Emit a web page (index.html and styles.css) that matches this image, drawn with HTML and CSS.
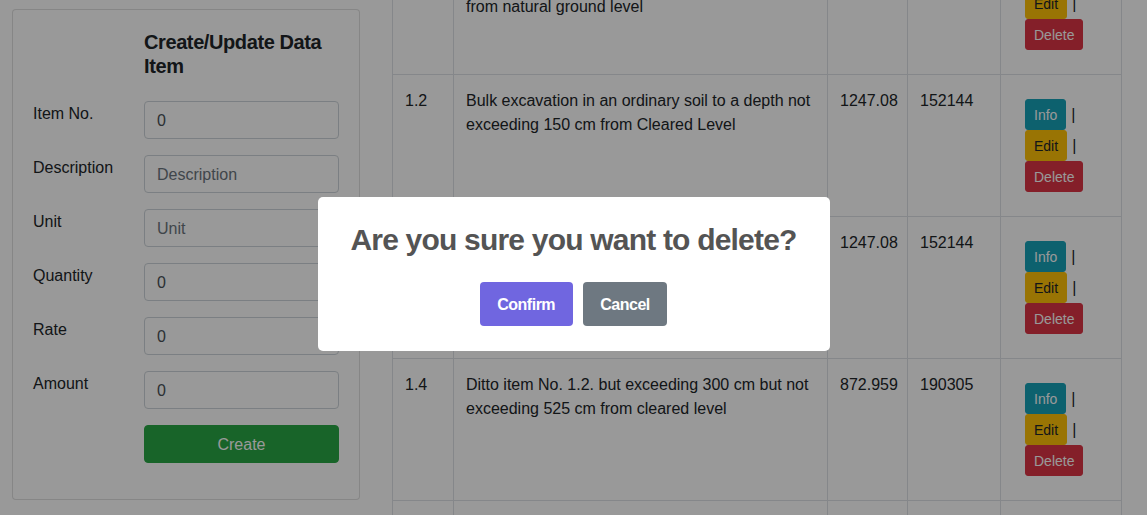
FILE: index.html
```html
<!DOCTYPE html>
<html lang="en">
<head>
<meta charset="utf-8">
<title>Data Items</title>
<link rel="stylesheet" href="styles.css">
</head>
<body>
<div class="page">
  <aside class="card">
    <h5 class="card-title">Create/Update Data Item</h5>
    <div class="form-row"><label class="form-label">Item No.</label><div class="field"><input class="form-control" type="text" value="0"></div></div>
    <div class="form-row"><label class="form-label">Description</label><div class="field"><input class="form-control" type="text" placeholder="Description"></div></div>
    <div class="form-row"><label class="form-label">Unit</label><div class="field"><input class="form-control" type="text" placeholder="Unit"></div></div>
    <div class="form-row"><label class="form-label">Quantity</label><div class="field"><input class="form-control" type="text" value="0"></div></div>
    <div class="form-row"><label class="form-label">Rate</label><div class="field"><input class="form-control" type="text" value="0"></div></div>
    <div class="form-row"><label class="form-label">Amount</label><div class="field"><input class="form-control" type="text" value="0"></div></div>
    <div class="form-row"><div class="form-label"></div><div class="field"><button class="btn-create" type="button">Create</button></div></div>
  </aside>

  <main class="table-wrap">
    <table class="items">
      <colgroup><col class="c-no"><col class="c-desc"><col class="c-qty"><col class="c-amt"><col class="c-act"></colgroup>
      <tbody>
        <tr>
          <td>1.1</td>
          <td class="desc">Site clearance and excavation in an ordinary<br>soil to a depth not exceeding 30 cm measured<br>from natural ground level</td>
          <td>1350.25</td>
          <td>45230</td>
          <td class="act-cell"><div class="actions">
            <div class="act-line"><button class="btn btn-info">Info</button><span class="sep">|</span></div>
            <div class="act-line"><button class="btn btn-warning">Edit</button><span class="sep">|</span></div>
            <div class="act-line"><button class="btn btn-danger">Delete</button></div>
          </div></td>
        </tr>
        <tr>
          <td>1.2</td>
          <td class="desc">Bulk excavation in an ordinary soil to a depth not<br>exceeding 150 cm from Cleared Level</td>
          <td>1247.08</td>
          <td>152144</td>
          <td class="act-cell"><div class="actions">
            <div class="act-line"><button class="btn btn-info">Info</button><span class="sep">|</span></div>
            <div class="act-line"><button class="btn btn-warning">Edit</button><span class="sep">|</span></div>
            <div class="act-line"><button class="btn btn-danger">Delete</button></div>
          </div></td>
        </tr>
        <tr>
          <td>1.3</td>
          <td class="desc">Ditto item No. 1.2. but exceeding 150 cm but not<br>exceeding 300 cm from cleared level</td>
          <td>1247.08</td>
          <td>152144</td>
          <td class="act-cell"><div class="actions">
            <div class="act-line"><button class="btn btn-info">Info</button><span class="sep">|</span></div>
            <div class="act-line"><button class="btn btn-warning">Edit</button><span class="sep">|</span></div>
            <div class="act-line"><button class="btn btn-danger">Delete</button></div>
          </div></td>
        </tr>
        <tr>
          <td>1.4</td>
          <td class="desc">Ditto item No. 1.2. but exceeding 300 cm but not<br>exceeding 525 cm from cleared level</td>
          <td>872.959</td>
          <td>190305</td>
          <td class="act-cell"><div class="actions">
            <div class="act-line"><button class="btn btn-info">Info</button><span class="sep">|</span></div>
            <div class="act-line"><button class="btn btn-warning">Edit</button><span class="sep">|</span></div>
            <div class="act-line"><button class="btn btn-danger">Delete</button></div>
          </div></td>
        </tr>
        <tr>
          <td>1.5</td>
          <td class="desc">Ditto item No. 1.2. but exceeding 525 cm from<br>cleared level</td>
          <td>645.310</td>
          <td>168420</td>
          <td class="act-cell"><div class="actions">
            <div class="act-line"><button class="btn btn-info">Info</button><span class="sep">|</span></div>
            <div class="act-line"><button class="btn btn-warning">Edit</button><span class="sep">|</span></div>
            <div class="act-line"><button class="btn btn-danger">Delete</button></div>
          </div></td>
        </tr>
      </tbody>
    </table>
  </main>
</div>

<div class="swal-backdrop">
  <div class="swal-popup" role="dialog">
    <h2 class="swal-title">Are you sure you want to delete?</h2>
    <div class="swal-actions">
      <button class="swal-btn swal-confirm" type="button">Confirm</button>
      <button class="swal-btn swal-cancel" type="button">Cancel</button>
    </div>
  </div>
</div>
</body>
</html>
```
FILE: styles.css
```css
html, body {
  margin: 0;
  height: 100%;
  overflow: hidden;
}
body {
  font-family: "Liberation Sans", Arial, sans-serif;
  font-size: 16px;
  line-height: 24px;
  color: #212529;
  background: #fff;
}

.page {
  display: flex;
  align-items: flex-start;
  gap: 32px;
  padding-left: 12px;
}

/* ---------- form card ---------- */
.card {
  flex: 0 0 348px;
  box-sizing: border-box;
  margin-top: 9px;
  padding: 20px;
  border: 1px solid rgba(0, 0, 0, 0.125);
  border-radius: 4px;
  background: #fff;
}
.card-title {
  width: 195px;
  margin: 0 0 23px 111px;
  font-size: 20px;
  line-height: 24px;
  font-weight: 700;
  letter-spacing: -0.4px;
}
.form-row {
  display: flex;
  margin-bottom: 16px;
}
.form-label {
  flex: 0 0 111px;
  padding-top: 1px;
}
.field {
  flex: 0 0 195px;
}
.form-control {
  display: block;
  width: 100%;
  height: 38px;
  box-sizing: border-box;
  padding: 7px 12px 5px;
  font-family: inherit;
  font-size: 16px;
  line-height: 24px;
  color: #495057;
  background: #fff;
  border: 1px solid #ced4da;
  border-radius: 4px;
}
.form-control::placeholder {
  color: #6c757d;
}
.btn-create {
  display: block;
  width: 100%;
  height: 38px;
  padding-top: 2px;
  font-family: inherit;
  font-size: 16px;
  color: #fff;
  background: #28a745;
  border: 1px solid #28a745;
  border-radius: 4px;
}

/* ---------- table ---------- */
.table-wrap {
  flex: 0 0 729px;
}
.items {
  width: 729px;
  table-layout: fixed;
  border-collapse: collapse;
  margin-top: -68px; /* list is scrolled */
}
.c-no { width: 61px; }
.c-desc { width: 374px; }
.c-qty { width: 80px; }
.c-amt { width: 93px; }
.c-act { width: 121px; }
.items td {
  padding: 14px 12px 10px;
  vertical-align: top;
  border: 1px solid #dee2e6;
}
.items td.desc {
  white-space: nowrap;
}
.items td.act-cell {
  padding: 12px;
}
.actions {
  padding: 12px;
}
.act-line {
  display: flex;
  align-items: center;
  gap: 5px;
  height: 31px;
}
.sep {
  line-height: 24px;
  padding-top: 1px;
}
.btn {
  font-family: inherit;
  font-size: 14px;
  line-height: 21px;
  padding: 5px 8px 3px;
  border: 1px solid transparent;
  border-radius: 3px;
}
.btn-info { background: #17a2b8; border-color: #17a2b8; color: #fff; }
.btn-warning { background: #ffc107; border-color: #ffc107; color: #212529; }
.btn-danger { background: #dc3545; border-color: #dc3545; color: #fff; }

/* ---------- sweetalert style dialog ---------- */
.swal-backdrop {
  position: fixed;
  inset: 0;
  box-sizing: border-box;
  padding-top: 33px;
  display: flex;
  align-items: center;
  justify-content: center;
  background: rgba(0, 0, 0, 0.4);
}
.swal-popup {
  width: 512px;
  box-sizing: border-box;
  padding: 0 0 20px;
  background: #fff;
  border-radius: 5px;
  text-align: center;
}
.swal-title {
  margin: 0;
  padding: 25px 16px 0;
  font-size: 30px;
  line-height: 36px;
  font-weight: 700;
  letter-spacing: -0.8px;
  color: #545454;
}
.swal-actions {
  display: flex;
  justify-content: center;
  margin-top: 19px;
}
.swal-btn {
  margin: 5px;
  padding: 11px 17.6px 9px;
  font-family: inherit;
  font-size: 16px;
  line-height: 24px;
  font-weight: 700;
  letter-spacing: -0.5px;
  color: #fff;
  border: 0;
  border-radius: 4px;
}
.swal-confirm { background: #7066e0; }
.swal-cancel { background: #6e7881; }
```
